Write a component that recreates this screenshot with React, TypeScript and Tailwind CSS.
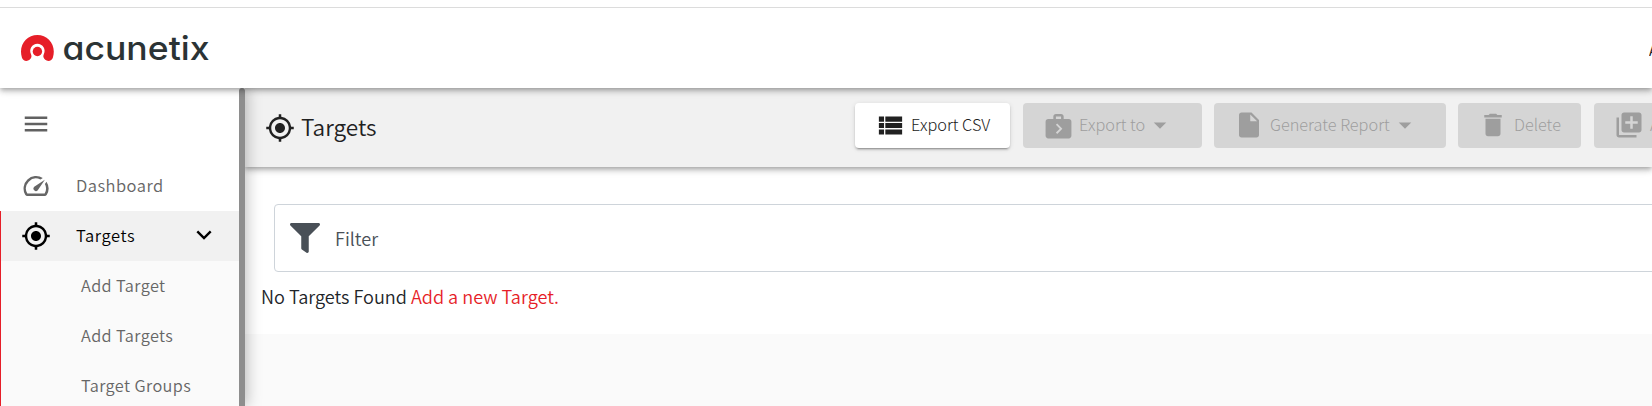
import React from "react";
import {
  MdArrowDropDown,
  MdDelete,
  MdInsertDriveFile,
  MdLibraryAdd,
  MdMenu,
  MdMyLocation,
  MdNextWeek,
  MdSpeed,
  MdViewList,
} from "react-icons/md";
import { FaFilter } from "react-icons/fa";

function Logo() {
  return (
    <div className="flex items-center">
      <svg width="33" height="26" viewBox="0 0 33 26" className="shrink-0">
        <path
          fill="#e61e28"
          d="M16.4 0C7.3 0 0 7.4 0 16.500c0 1.900.3 4 .9 6.100C1.600 24.800 3.300 26 5.400 26c2.400 0 4.400-1.600 5-3.900.2-.9 0-1.800-.3-2.700a7.200 7.200 0 1 1 12.600 0c-.3.900-.5 1.800-.3 2.700.6 2.300 2.600 3.900 5 3.900 2.100 0 3.800-1.200 4.500-3.400.6-2.100.9-4.200.9-6.100C32.800 7.400 25.500 0 16.400 0Z"
        />
        <circle cx="16.400" cy="16.500" r="4.700" fill="#e61e28" />
      </svg>
      <svg width="152" height="46" viewBox="0 0 152 46" className="ml-[8px] shrink-0">
        <text
          x="0.500"
          y="34.500"
          fontSize="33"
          textLength="147"
          lengthAdjust="spacingAndGlyphs"
          fill="#2b3335"
          className="font-[Inter] font-medium [font-feature-settings:'cv11']"
        >
          acunetix
        </text>
      </svg>
    </div>
  );
}

function ToolButton({
  icon,
  label,
  className,
  caret = false,
  disabled = true,
}: {
  icon: React.ReactNode;
  label: string;
  className: string;
  caret?: boolean;
  disabled?: boolean;
}) {
  const tone = disabled
    ? "bg-[#d5d5d5] text-[#9e9e9e]"
    : "bg-white text-[#212121] shadow-[0_3px_1px_-2px_rgba(0,0,0,0.2),0_2px_2px_0_rgba(0,0,0,0.14),0_1px_5px_0_rgba(0,0,0,0.12)]";
  return (
    <button
      className={`flex h-[45px] shrink-0 items-center rounded-[4px] text-[16.300px] font-light whitespace-nowrap ${tone} ${className}`}
    >
      {icon}
      <span className="pb-[2px]">{label}</span>
      {caret && <MdArrowDropDown className="mb-[2px] size-[30px]" />}
    </button>
  );
}

export default function App() {
  return (
    <div className="flex h-[406px] w-full flex-col overflow-hidden bg-white font-['Noto_Sans_CJK_SC',sans-serif]">
      <header className="z-20 mt-[7px] flex h-[81px] shrink-0 items-center justify-between border-t border-[#dcdcdc] bg-white pl-[21px] shadow-[0_2px_4px_-1px_rgba(0,0,0,0.2),0_4px_5px_0_rgba(0,0,0,0.14),0_1px_10px_0_rgba(0,0,0,0.12)] [clip-path:inset(0_0_-20px_0)]">
        <Logo />
        <span className="mt-[4px] w-[3px] overflow-hidden text-[14px] whitespace-nowrap text-[#212121]">
          A
        </span>
      </header>

      <div className="flex min-h-0 flex-1">
        <aside className="z-10 flex w-[245px] shrink-0 shadow-[2px_0_14px_rgba(0,0,0,0.25)]">
          <nav className="w-[239px] shrink-0 bg-white text-[16.500px] font-[350] tracking-[0.480px] text-[#666666]">
            <div className="flex h-[73px] items-center pb-[1px] pl-[21px]">
              <MdMenu className="size-[30px] text-[#616161]" />
            </div>
            <div className="flex h-[50px] items-center pl-[21px]">
              <MdSpeed className="mb-[1px] size-[30px]" />
              <span className="ml-[25px] pb-[2px]">Dashboard</span>
            </div>
            <div className="border-l border-[#e61e28] bg-[#fafafa]">
              <div className="flex h-[50px] items-center bg-[#f1f1f1] pl-[20px] text-black">
                <MdMyLocation className="size-[30px]" />
                <span className="ml-[25px] pb-[2px] tracking-[0.600px]">Targets</span>
                <svg
                  viewBox="0 0 16 10"
                  className="mr-[27px] mb-[2px] ml-auto h-[10px] w-[16px]"
                  fill="none"
                  stroke="currentColor"
                  strokeWidth="2.400"
                >
                  <path d="M1.300 1.300 8 8l6.700-6.700" />
                </svg>
              </div>
              <div className="text-[16.300px] tracking-[0.400px]">
                <div className="flex h-[50px] items-center pb-[2px] pl-[80px]">Add Target</div>
                <div className="flex h-[50px] items-center pb-[2px] pl-[80px]">Add Targets</div>
                <div className="flex h-[50px] items-center pb-[2px] pl-[80px]">Target Groups</div>
              </div>
            </div>
          </nav>
          <div className="w-[6px] shrink-0 rounded-t-[3px] bg-[#8e8e8e]" />
        </aside>

        <main className="flex min-w-0 flex-1 flex-col bg-[#fafafa]">
          <div className="z-[1] flex h-[79px] shrink-0 items-center bg-[#f1f1f1] pl-[20px] shadow-[0_2px_4px_-1px_rgba(0,0,0,0.2),0_4px_5px_0_rgba(0,0,0,0.14),0_1px_10px_0_rgba(0,0,0,0.12)]">
            <div className="flex w-[590px] shrink-0 items-center text-[#212121]">
              <MdMyLocation className="mt-[1px] size-[30px]" />
              <h1 className="ml-[6px] pb-[1px] text-[22.600px] font-[350]">Targets</h1>
            </div>
            <div className="-mt-[4px] flex gap-[12px]">
              <ToolButton
                disabled={false}
                label="Export CSV"
                className="w-[155px] pl-[20px]"
                icon={<MdViewList className="mr-[5px] mb-[1px] size-[31px]" />}
              />
              <ToolButton
                caret
                label="Export to"
                className="ml-[1px] w-[179px] pl-[20px]"
                icon={<MdNextWeek className="mr-[5px] size-[31px]" />}
              />
              <ToolButton
                caret
                label="Generate Report"
                className="w-[232px] pl-[20px]"
                icon={<MdInsertDriveFile className="mr-[6px] mb-[1px] size-[30px]" />}
              />
              <ToolButton
                label="Delete"
                className="w-[123px] pl-[20px]"
                icon={<MdDelete className="mr-[6px] mb-[1px] size-[30px]" />}
              />
              <ToolButton
                label="A"
                className="ml-[1px] w-[180px] pl-[20px]"
                icon={<MdLibraryAdd className="mr-[6px] mb-[1px] size-[30px]" />}
              />
            </div>
          </div>

          <div className="h-[167px] shrink-0 bg-white pt-[37px]">
            <div className="-mr-[10px] ml-[29px] flex h-[68px] items-center rounded-[4px] border border-[#ced4da] pl-[15px]">
              <FaFilter className="size-[30px] text-[#495057]" />
              <span className="mt-[1px] ml-[15px] text-[18.100px] font-[350] text-[#495057]">Filter</span>
            </div>
            <p className="mt-[11px] ml-[16px] text-[18.100px] leading-[27px] font-[350] text-[#212529]">
              No Targets Found <a className="text-[#e61e28]">Add a new Target.</a>
            </p>
          </div>
        </main>
      </div>
    </div>
  );
}
